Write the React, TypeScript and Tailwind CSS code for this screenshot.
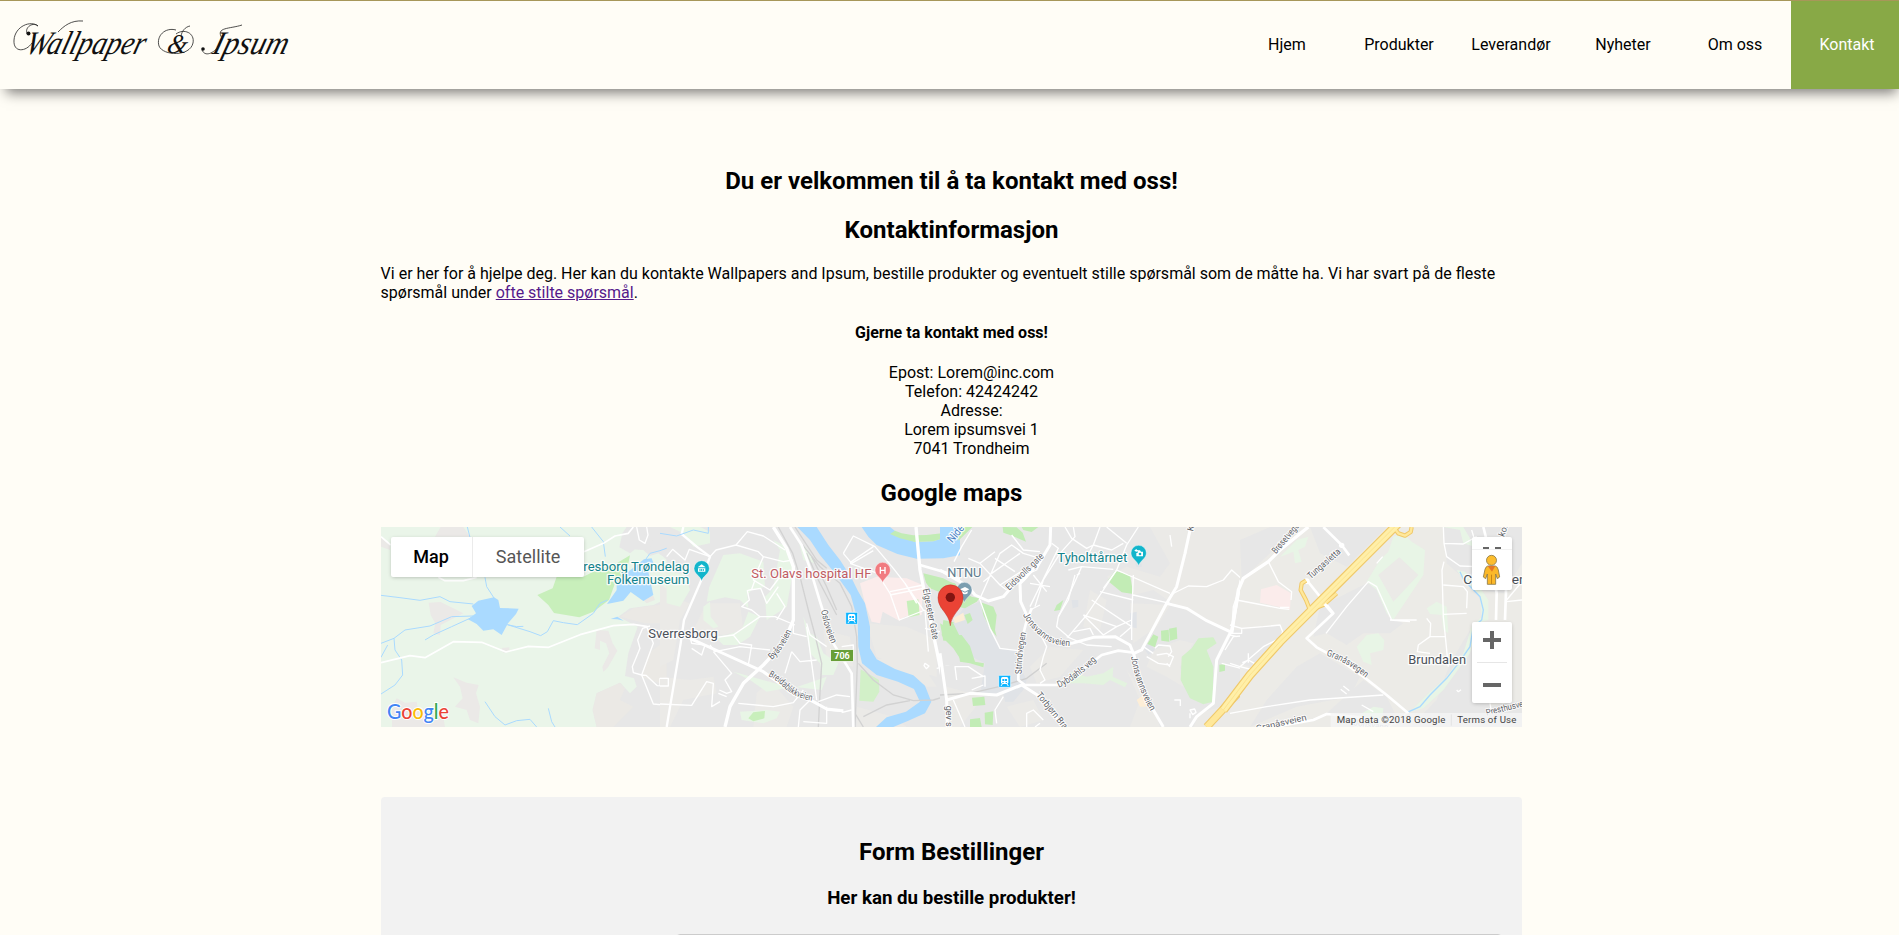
import React from "react";

const NAV = ["Hjem", "Produkter", "Leverandør", "Nyheter", "Om oss"];

type LabelProps = {
  x: number;
  y: number;
  w?: number;
  size?: number;
  rotate?: number;
  fill?: string;
  anchor?: "start" | "middle" | "end";
  weight?: number;
  children: string;
};

function Label({ x, y, w, size = 40, rotate = 0, fill = "#4a5058", anchor = "start", weight = 400, children }: LabelProps) {
  return (
    <text
      x={x}
      y={y}
      fontSize={size}
      fontWeight={weight}
      fill={fill}
      stroke="#ffffff"
      strokeWidth={size > 32 ? 8 : 6}
      strokeOpacity={0.85}
      strokeLinejoin="round"
      paintOrder="stroke"
      textAnchor={anchor}
      textLength={w}
      lengthAdjust="spacingAndGlyphs"
      transform={rotate ? `rotate(${rotate} ${x} ${y})` : undefined}
    >
      {children}
    </text>
  );
}

function CurvedLabel({ id, d, size = 28, w, children }: { id: string; d: string; size?: number; w?: number; children: string }) {
  return (
    <g>
      <path id={id} d={d} fill="none" />
      <text fontSize={size} fill="#5f6368" stroke="#fff" strokeWidth="6" strokeOpacity=".85" paintOrder="stroke" textLength={w} lengthAdjust="spacingAndGlyphs">
        <textPath href={`#${id}`}>{children}</textPath>
      </text>
    </g>
  );
}

function Pin({ x, y, fill, children }: { x: number; y: number; fill: string; children: React.ReactNode }) {
  return (
    <g transform={`translate(${x} ${y})`}>
      <path d="M0 37 C-4 22 -23 16 -23 -1 A23 23 0 0 1 23 -1 C23 16 4 22 0 37Z" fill={fill} stroke="#fff" strokeOpacity=".6" strokeWidth="2" />
      {children}
    </g>
  );
}

function Station({ x, y }: { x: number; y: number }) {
  return (
    <g transform={`translate(${x} ${y})`}>
      <rect x="-18" y="-18" width="36" height="36" rx="3" fill="#0fb5ff" stroke="#fff" strokeWidth="2" />
      <rect x="-11" y="-13" width="22" height="21" rx="5" fill="#fff" />
      <path d="M-7 -7h6v6h-6z M1 -7h6v6h-6z M-7 2h4v3h-4z M3 2h4v3h-4z" fill="#0fb5ff" />
      <path d="M-7 8l-4 6 M7 8l4 6" stroke="#fff" strokeWidth="3" />
    </g>
  );
}

/* The map is drawn in four adjoining tiles; each tile uses thirds of a pixel. */
function WestTile() {
  return (
    <g transform="translate(-11 -7) scale(.33333)">
      <rect x="33" y="21" width="870" height="600" fill="#eaf5e9" />
      <g fill="#ebe9e7">
        <path d="M195 50 L212 21 H280 L300 50Z" />
        <path d="M176 248 L212 246 L280 280 L212 315 L210 345 L190 340 L196 310 L182 285Z" />
        <path d="M395 384 L418 382 L418 392 L400 398Z" />
        <path d="M250 472 L290 488 L326 495 L318 520 L330 560 L325 610 L300 600 L290 570 L255 560 L278 535 L270 500Z" />
        <path d="M66 560 L80 535 L105 548 L140 545 L145 575 L220 590 L225 621 H66Z" />
        <path d="M680 330 L715 332 L728 370 L742 392 L715 440 L700 456 L697 440 L718 400 L708 370 L690 362 L690 390 L674 385Z" />
        <path d="M33 50 L60 75 V90 L33 80Z" />
      </g>
      <path d="M770 21 H903 V130 L880 110 L865 100 L840 108 L820 90 L795 88 L780 100 L748 82 L757 40Z M745 290 L780 265 L850 255 L903 230 V621 H680 L668 570 L680 520 L750 488 L780 520 L800 500 L792 475 L765 468 L775 400 L803 320Z" fill="#e7e7e7" />
      <path d="M815 470 L835 400 L903 350 V500 L840 480Z M680 621 L668 570 L680 520 L750 488 L765 505 L750 540 L790 560 L730 621Z M750 290 L790 265 L903 250 V310 L825 310Z M810 230 L850 228 L855 240 L830 250Z" fill="#ebe9e5" />
      <path d="M795 88 L820 40 L850 65 L835 90Z" fill="#e7e7e7" />
      <path d="M502 225 L548 205 L560 170 L640 170 L680 150 L740 130 L780 106 L768 165 L735 190 L717 240 L670 275 L628 292 L552 279 L535 255Z" fill="#c8efbb" />
      <g fill="#aadaff">
        <path d="M294 298 L318 280 L305 258 L325 242 L372 232 L385 240 L390 264 L446 266 L438 282 L414 310 L395 345 L370 328 L340 332 L320 312Z" />
        <path d="M711 252 L740 210 L740 188 L775 155 L822 118 L845 115 L852 134 L835 155 L850 225 L820 243 L782 216 L760 242Z" />
        <path d="M722 297 L742 290 L761 302 L742 298Z" />
      </g>
      <g fill="none" stroke="#aadaff" strokeWidth="3">
        <path d="M33 226 L90 233 L150 241 L210 230 L240 245 L310 252" />
        <path d="M33 370 L72 355 L105 330 L180 318 L245 290 L310 288 M165 360 L190 345 L245 320 L315 288 M72 355 L75 390 L95 420 L98 465 L75 495 L33 522 M33 412 L53 375" />
        <path d="M345 172 L350 200 L372 234 M292 21 L302 60 M412 314 L480 335 L512 347 L532 335 L550 302 L580 308 L622 314 L670 280 L690 250 L712 240 M412 314 L440 320 L460 319" />
        <path d="M345 545 L375 590 L405 615 L440 602 L480 598 L500 621 M535 565 L545 605 L555 621 M665 21 L700 65 L706 110 M570 21 L600 48 M820 128 L840 100 L870 92 L903 80" />
      </g>
      <g fill="none" stroke="#fff" strokeWidth="5" strokeLinejoin="round">
        <path d="M33 428 L120 407 L165 413 L250 365 L335 367 L408 396 L475 379 L536 382 L630 344 L730 317 L790 313 L833 320" />
        <path d="M205 172 L225 182 L280 182 L320 172 M33 50 L62 75 M642 95 L700 70 L735 48 L775 40 L790 21" />
        <path d="M800 21 L808 60 L825 70 L834 45 L830 21 M840 318 L818 325 L803 360 L810 385 L787 440 L790 458 L815 465 L850 552 L892 556 M830 320 L850 370 L815 465 L828 466 L862 497 L903 498 M870 475 h25 v20 h-25z" strokeWidth="4" />
      </g>
    </g>
  );
}

function RiverTile() {
  return (
    <g transform="translate(279 -7) scale(.33333)">
      <rect x="20" y="21" width="882" height="600" fill="#e7e7e7" />
      <path d="M0 190 L60 240 L90 250 L60 300 L40 420 L0 440Z M0 470 L90 480 L160 470 L170 520 L70 540 L30 621 H0Z M280 621 L290 520 L330 480 L400 560 L380 621Z M600 420 L770 410 L830 500 L780 500 L600 430Z M620 310 L740 320 L830 360 L830 470 L720 440 L650 410Z M100 330 L140 250 L240 250 L250 330 L190 345Z M490 330 L570 350 L580 440 L500 420Z M590 560 L700 590 L740 621 H590Z" fill="#ebeae7" />
      <g fill="#e8f5e6">
        <path d="M20 150 L75 165 L90 210 L60 260 L20 250Z M30 21 H120 L150 35 L150 70 L100 80 L70 40Z" />
        <path d="M148 200 L190 105 L240 100 L310 125 L315 200 L275 210 L262 225 L265 265 L240 240 L195 232 L140 245Z M265 275 L300 290 L270 350 L232 375 L190 375 L165 350 L200 345 L245 330Z M130 260 L150 245 L152 290 L175 320 L160 325 L130 300Z" />
        <path d="M315 230 L340 205 L360 90 L340 60 L380 80 L400 150 L380 260 L320 300Z M415 60 L440 85 L465 130 L430 120Z" />
        <path d="M220 455 L290 475 L400 505 L500 470 L485 510 L400 500 L320 515 L270 480Z M430 290 L450 340 L470 350 L490 400 L535 430 L520 465 L485 465 L480 430 L450 400 L440 345Z M240 575 L320 570 L360 575 L350 595 L310 610 L245 600Z" />
      </g>
      <path d="M602 448 L657 480 L658 515 L640 545 L598 542Z" fill="#d2f0c8" />
      <path d="M265 595 L280 577 L315 573 L313 595 L280 604Z" fill="#c8efbb" />
      <path d="M600 190 L650 170 L740 175 L788 195 L785 285 L735 290 L718 302 L668 275 L660 310 L635 305 L615 250Z" fill="#fbeceb" />
      <path d="M740 243 L775 238 L779 285 L746 292Z" fill="#c8efbb" />
      <path d="M412 21 H470 L505 75 L540 120 L575 175 L595 215 L615 250 L630 320 L630 385 L650 418 L705 447 L760 466 L795 497 L814 545 L795 580 L745 602 L700 621 H648 L680 592 L738 575 L780 545 L762 507 L714 485 L650 465 L606 430 L595 380 L593 300 L572 225 L525 160 L480 105 L450 60Z" fill="#aadaff" />
      <path d="M605 21 H690 L720 45 L765 66 L820 64 L860 50 L882 21 H903 V105 L850 115 L770 116 L712 102 L650 75 L625 50Z" fill="#aadaff" />
      <path d="M690 42 L705 32 L725 40 L760 46 L800 45 L845 40 L870 21 H882 L865 50 L820 64 L765 66 L720 55Z M790 160 L850 175 L888 195 L840 217 L810 205 L798 188Z M850 300 L895 310 L903 420 L880 385 L855 360 L845 345Z" fill="#c2ecb5" />
      <g fill="none" stroke="#d2d2d2" strokeWidth="4">
        <path d="M355 21 L398 100 L420 170 L445 270 L465 345 L485 430 L480 520 L475 621 M400 40 L480 140 L540 190 L575 260 L590 350 L592 430 L585 621 M405 21 L470 120 L500 145 M440 100 L475 180 L530 285 M455 110 L500 200 L530 270 M595 430 L640 480 L700 525 L760 542 L820 540 L903 515 M610 590 L680 555 L750 542 M585 580 L610 621" />
      </g>
      <g fill="none" stroke="#fff" strokeWidth="4" strokeLinejoin="round">
        <path d="M20 110 L38 88 L75 120 L88 88 L150 110 L168 90 L228 75 L262 35 L310 48 L375 90 M228 75 L295 95 L310 110 L370 125 L398 120 M310 110 L280 180 L330 210 L375 150" />
        <path d="M285 180 L275 208 L262 212 L268 240 L245 260 L275 270 L300 290 L220 345 L150 355 M270 210 L302 205 L320 250 L355 200 M300 290 L345 290 L405 315 M350 220 L375 260 L350 300 M220 345 L240 370 L275 375 L265 435 M150 375 L165 395 L240 380 L330 390" />
        <path d="M90 350 L95 370 L135 375 L125 405 L95 385 M160 395 L215 460 L195 480 L215 515 L200 520 L178 510 M0 475 h25 v23 h-25 M0 552 L95 556 L140 485 L160 490 L155 560 L180 545 M175 520 L200 530" />
        <path d="M235 550 L340 560 L400 548 L430 510 M395 395 L420 425 L470 420 M395 395 L375 460 M400 310 L400 340 L440 350 M475 545 L530 525 L570 530 M575 570 L545 578 M500 560 L500 610 L430 605 M500 570 L550 575 M415 621 L420 570 L460 530 M440 320 L455 430 L470 540" />
        <path d="M440 310 L450 345 L500 380 M545 380 L580 375 L580 420 M550 100 L580 48 L645 80 L700 145 L735 190 L790 270 M550 100 L575 130 L640 92 M570 130 L680 170 M640 80 L570 128 M655 165 L690 220 L718 300 L795 270 M690 215 L790 195 M690 225 L790 205 M735 190 L770 250 M795 325 L840 335 M795 270 L805 395 M830 445 L865 438 L903 440 M795 430 l12 8 l-8 8 l-7 -9z" />
      </g>
      <g fill="none" stroke="#fff" strokeLinejoin="round">
        <path d="M70 21 L65 42 L110 80 L150 110 L120 190 L72 300 L62 370 L20 621" strokeWidth="7" />
        <path d="M340 21 L380 85 L400 140 L400 300 L370 370 L310 435 L250 490 L210 560 L195 621" strokeWidth="10" />
        <path d="M390 21 L425 75 L450 145 L480 245 L520 370 L575 460 L580 621" strokeWidth="8" />
        <path d="M90 355 L200 405 L310 455 L380 505 L460 545 L500 567 L550 572" strokeWidth="9" />
        <path d="M768 21 L780 150 L800 250 L830 390 L860 540 L875 621" strokeWidth="10" />
        <path d="M780 135 L860 158 L903 180 M865 540 L903 530" strokeWidth="8" />
      </g>
      <g fill="none" stroke="#aadaff" strokeWidth="3"><path d="M0 40 L50 48 L100 30 L145 40 V21" /></g>
      <Label x={88} y={153} w={318} size={39} fill="#12828a" anchor="end">resborg Trøndelag</Label>
      <Label x={88} y={191} w={247} size={39} fill="#12828a" anchor="end">Folkemuseum</Label>
      <Label x={-35} y={353} w={208} size={38}>Sverresborg</Label>
      <Label x={274} y={175} w={360} size={38} fill="#c05c63">St. Olavs hospital HF</Label>
      <Pin x={125} y={146} fill="#12b5cb">
        <path d="M-12 -4 L0 -13 L12 -4Z M-11 -1h22v10h-22z" fill="#fff" />
        <path d="M-5 1v6 M0 1v6 M5 1v6" stroke="#12b5cb" strokeWidth="3" />
      </Pin>
      <Pin x={668} y={151} fill="#f17b80">
        <path d="M-7 -10v20 M7 -10v20 M-7 0h14" stroke="#fff" strokeWidth="4" />
      </Pin>
      <Station x={575} y={295} />
      <rect x="512" y="389" width="68" height="35" fill="#689f38" stroke="#fff" strokeWidth="2" />
      <text x="546" y="416" fontSize="27" fontWeight="700" textAnchor="middle" fill="#fff" textLength="46">706</text>
      <CurvedLabel id="byas" d="M335 420 Q370 390 397 328" w={106}>Byåsveien</CurvedLabel>
      <CurvedLabel id="oslo" d="M483 272 Q492 320 515 374" w={105}>Osloveien</CurvedLabel>
      <CurvedLabel id="breid" d="M325 468 Q350 480 380 510 Q410 535 462 544" w={153}>Breidablikkveien</CurvedLabel>
      <CurvedLabel id="elge" d="M788 208 L820 366" w={155}>Elgeseter Gate</CurvedLabel>
    </g>
  );
}

function CampusTile() {
  return (
    <g transform="translate(559 -7) scale(.33333)">
      <path d="M60 21 H903 V621 H0 V440 L60 430Z" fill="#e7e7e7" />
      <path d="M630 21 H903 V330 L850 330 L690 245 L640 210 L580 225 L500 170 L560 140 L660 170 L690 130Z M570 250 L690 255 L650 320 L580 370Z M450 210 L500 240 L480 330 L430 320Z M640 390 L720 360 L760 370 L720 440 L730 500 L680 470 L620 440Z M270 440 L330 380 L430 390 L360 470 L290 490Z M20 500 L130 530 L60 621 H20Z M200 560 L280 540 L310 600 L240 621Z M560 450 L640 560 L660 621 H570L600 540Z M780 580 L903 540 V621 H760Z" fill="#ebeae7" />
      <path d="M0 21 H80 L58 58 L30 90 L0 108Z" fill="#aadaff" />
      <path d="M55 21 H97 L85 33 L55 62Z M188 21 L230 22 L248 38 L258 65 L210 45 L190 38Z M245 21 H295 L275 36 L250 30Z" fill="#c2ecb5" />
      <path d="M70 265 L120 245 L130 285 L150 330 L180 388 L235 390 L245 450 L260 480 L250 510 L220 545 L195 545 L190 520 L120 525 L135 430 L95 410 L60 350 L40 310Z" fill="#e0e3e7" />
      <g fill="#e0e3e7"><path d="M395 240 L415 240 L415 260 L398 265Z M610 380 L630 370 L645 390 L625 405Z M585 130 L605 130 L605 140 L590 142Z M570 280 L590 275 L590 325 L570 320Z" /></g>
      <path d="M0 180 L45 190 L60 210 L95 230 L118 235 L110 245 L75 265 L30 255 L0 265Z M0 310 L35 330 L50 345 L65 345 L90 378 L105 425 L132 430 L130 442 L90 430 L60 425 L55 390 L40 360 L10 362Z M73 285 L90 279 L98 300 L83 312Z M122 247 L160 260 L170 285 L165 330 L170 350 L150 325 L130 285Z M350 255 L370 240 L360 270 L342 273Z M503 182 L525 152 L570 165 L580 222 L545 217Z M622 372 L640 343 L655 350 L645 382Z M663 332 L686 329 L688 365 L664 362Z M687 326 L710 322 L712 356 L690 362Z M96 533 L133 530 L136 555 L99 558Z M134 578 L160 574 L158 615 L135 613Z M90 598 L120 594 L125 621 H90Z M838 434 L855 432 L855 452 L838 456Z" fill="#c2ecb5" />
      <path d="M775 355 L820 352 L830 370 L800 390 L820 440 L818 545 L790 553 L750 535 L722 480 L725 410 L755 385Z" fill="#d2f0c8" />
      <path d="M395 455 L440 470 L490 460 L520 440 L518 470 L562 490 L555 502 L510 480 L490 495 L430 490 L380 490Z" fill="#e3f3df" />
      <path d="M40 295 L70 278 L75 300 L45 310Z M590 540 L610 525 L620 560 L600 560Z" fill="#fdeed7" />
      <g fill="none" stroke="#d0d0d0" strokeWidth="4"><path d="M0 525 L90 520 L190 497 L260 475 L320 430" /></g>
      <g fill="none" stroke="#fff" strokeWidth="4" strokeLinejoin="round">
        <path d="M42 125 L65 80 L95 30 M118 240 L180 100 L215 75 L250 100 L310 118 M85 115 L120 130 L180 195 L200 210 M120 130 L165 95 M155 160 L240 100 M165 115 L225 155 M130 185 L155 165 M180 195 L250 150 M215 45 L250 90 L300 95" />
        <path d="M335 70 L355 85 L270 260 M310 110 L290 150 L255 165 M375 21 L395 55 L440 85 L460 75 L515 90 L550 70 M400 21 L405 50 L360 100 L310 180 L285 260 M480 21 L460 75 M500 21 L560 70 M595 21 L560 75 L530 150 L440 285 L385 350 L350 320 L355 290 L380 240 L425 140 L520 148 M385 150 L425 140 M460 75 L430 130 M270 190 L330 200 M280 165 L320 215" />
        <path d="M410 165 L420 160 M355 290 L385 240 L405 165 M490 205 L530 150 L690 220 M580 225 L690 250 M580 165 L575 300 L575 360 M430 285 L530 320 L575 300 M455 240 L575 320 L540 350 M480 215 L580 240 M430 285 L490 345 L530 320 M400 335 L450 325 L460 345" />
        <path d="M380 350 L440 375 L515 380 M270 270 L300 255 M265 300 L300 340 L320 380 L310 410 L300 450 L315 480 L300 490 M50 480 L45 440 L85 440 L130 470 M95 475 L135 468 L135 500 M130 495 L95 510 M120 240 L150 325 L180 385 L235 392 M170 610 L165 570 L190 530 M260 621 L260 580 L280 570 L310 600 M300 610 L285 621 M40 540 L75 621 M640 400 L610 380 M620 410 L655 430 L690 435 L700 410 L680 400 L650 405 M645 385 L655 375 L690 378 L695 395 L685 410 M680 430 L690 440" />
        <path d="M703 540 h18 v18 M750 570 l14 -3 l4 10 l-10 7z M750 580v15" />
        <path d="M690 225 L745 198 L800 200 L850 180 L875 150 L903 175 M875 330 L880 260 L903 190 M845 430 L903 445 M855 390 L880 350 L903 348 M690 45 L695 80 M735 90 L738 100" />
      </g>
      <g fill="none" stroke="#fff" strokeLinejoin="round">
        <path d="M332 21 L330 75 L300 125 L250 180 L220 195 L190 230 L145 243 L105 225 L85 200 L0 150" strokeWidth="9" />
        <path d="M260 170 L240 190 L242 245 L260 285 L300 340 L350 370 L395 370 L460 352 L525 350 L570 375 L582 405 L605 510 L640 570 L670 621" strokeWidth="9" />
        <path d="M275 265 L258 310 L235 400 L235 480 L255 495 L350 495 L440 440 L485 405 L535 392 L582 398" strokeWidth="8" />
        <path d="M20 540 L90 520 L170 525 L245 495 L300 530 L370 621 M0 400 L20 540 L22 621" strokeWidth="9" />
        <path d="M752 21 L735 100 L710 200 L680 250 L605 390 L582 400 M680 250 L740 265 L800 302 L870 335 M903 180 L875 330 L830 420 L820 550 L770 590 L750 621" strokeWidth="9" />
      </g>
      <path d="M800 621 L903 510" stroke="#f0c96a" strokeWidth="24" />
      <path d="M800 621 L903 510" stroke="#ffe89a" strokeWidth="18" />
      <Label x={37} y={70} w={58} rotate={-50} size={33} fill="#4a80c5">Nide</Label>
      <Label x={22} y={172} w={102} size={38} fill="#5f7d8e">NTNU</Label>
      <Label x={352} y={125} w={210} size={39} fill="#12828a">Tyholttårnet</Label>
      <Pin x={596} y={100} fill="#12b5cb">
        <path d="M-4 -9h8l3 4h6v14h-20V-1h4z M-12 -10h3v-3h3v3h3v3h-3v3h-3v-3h-3z" fill="#fff" />
        <circle cx="4" cy="2" r="4" fill="#12b5cb" />
      </Pin>
      <Pin x={73} y={211} fill="#7b9eb0">
        <path d="M-13 -3L2 -10L15 -3L2 4Z M-7 3v6q9 6 17 0V3L2 7Z" fill="#fff" />
      </Pin>
      <path d="M31 317 C27 278 -6 267 -6 233 A37 38 0 0 1 69 233 C69 267 35 278 31 317Z" fill="#ea4335" stroke="#c5322a" strokeWidth="1.5" />
      <circle cx="31" cy="232" r="14" fill="#811411" />
      <Station x={194} y={484} />
      <CurvedLabel id="eids" d="M208 212 L316 108" w={146}>Eidsvolls gate</CurvedLabel>
      <CurvedLabel id="jons1" d="M248 285 Q288 350 340 370 Q360 377 394 378" w={178}>Jonsvannsveien</CurvedLabel>
      <CurvedLabel id="strind" d="M245 462 Q244 400 260 334" w={125}>Strindvegen</CurvedLabel>
      <CurvedLabel id="dyb" d="M357 503 Q410 480 472 418" w={140}>Dybdahls veg</CurvedLabel>
      <CurvedLabel id="torb" d="M288 526 L378 638" w={132}>Torbjørn Bra</CurvedLabel>
      <CurvedLabel id="jons2" d="M573 410 Q585 490 634 578" w={175}>Jonsvannsveien</CurvedLabel>
      <Label x={17} y={557} w={78} rotate={90} size={27} fill="#5f6368">gev su</Label>
      <Label x={759} y={35} rotate={-75} size={27} fill="#5f6368">Kong</Label>
    </g>
  );
}

function EastTile() {
  return (
    <g transform="translate(849 -7) scale(.33333)">
      <rect x="30" y="21" width="850" height="600" fill="#ecebe7" />
      <path d="M30 60 L120 21 H200 L120 100 L35 180Z M240 21 H470 L350 140 L270 100Z M30 330 L150 315 L160 350 L60 440 L30 430Z M270 260 L410 190 L445 205 L475 290 L520 310 L480 340 L400 340 L350 375 L290 340 L250 350Z M60 621 L110 540 L200 440 L270 400 L390 470 L360 530 L200 560Z M640 21 H876 V130 L820 220 L740 210 L650 130Z M660 430 L720 330 L780 560 L876 540 V621 H540 L620 540Z M400 480 L470 530 L500 590 L400 621 L290 580Z" fill="#e7e7e7" />
      <g fill="#e8f5e6">
        <path d="M490 50 L520 40 L545 65 L585 90 L580 165 L490 300 L470 280 L440 210 L410 185 L450 120 L475 95Z" />
        <path d="M380 380 L410 345 L445 340 L463 360 L460 390 L420 400 L425 435 L400 425Z M590 265 L620 245 L650 260 L655 340 L640 330 L635 285 L600 282Z M680 150 L705 155 L740 190 L775 240 L775 300 L740 310 L720 400 L640 510 L580 565 L540 575 L590 525 L650 470 L700 400 L725 320 L755 290 L750 230 L700 180Z M640 21 H700 L735 80 L700 70 L690 30Z M150 110 L200 60 L235 50 L225 80 L205 90 L215 125 L195 130 L190 95 L165 105Z M370 595 L430 560 L460 565 L455 621 H380Z" />
      </g>
      <path d="M445 165 L508 112 L565 165 L490 245Z" fill="#ebeae7" />
      <path d="M93 208 L140 195 L183 220 L180 268 L90 248Z" fill="#fbeceb" />
      <g fill="none" stroke="#aadaff" strokeWidth="4"><path d="M690 155 L700 178 L750 230 L760 270 L755 300 L730 320 L720 380 L685 430 L650 475 L600 525 L570 560 L530 578" /></g>
      <g fill="none" stroke="#fff" strokeWidth="4" strokeLinejoin="round">
        <path d="M115 125 L145 185 L185 215 L183 240 M20 240 L150 265 L178 268 M150 262h28 M115 125 L140 100 M0 315 L35 325 L100 320 L150 315 L158 335 L150 355 L100 380 L30 440 L70 450 M0 340 h35 v-12 M0 345 L20 350 M0 430 L30 440 M55 400 v28 M55 420 l-18 8 M55 420 l18 10 M0 580 L110 560 L240 540 L460 525 M340 498 L358 512 M332 508 L350 522 M395 555 L430 575" />
        <path d="M288 340 L350 260 L415 185 L440 200 L485 300 L560 300 M480 300 L540 305 M640 21 L642 70 L650 110 L690 138 L740 140 M642 70 L700 72 L740 50 M642 125 L636 150 L640 290 L655 440 M640 283 L710 280 M640 195 L700 200 L712 215 L710 265 M590 295 L602 310 L600 350 L565 375 L562 395 L600 400 M600 350 L645 350 M830 245 L876 240 M880 180 L830 240 M725 30 L740 80 M680 510 l5 5 l8 -6 M440 130 l18 -20 M475 621 L530 580 M780 550 L785 580" />
        <path d="M760 21 L780 100 L800 220 L798 300 M815 40 L830 160 L825 300" strokeWidth="8" />
      </g>
      <g fill="none" stroke="#fff" strokeLinejoin="round">
        <path d="M235 21 L150 90 L115 125 L40 175 L25 210 L5 340" strokeWidth="10" />
        <path d="M280 21 L335 75 L358 106 M230 180 L310 280 L230 355 L260 382 L330 420 L400 470 L470 525 L535 580" strokeWidth="8" />
        <path d="M130 621 L250 600 L290 582 L370 590 L500 610" strokeWidth="8" />
        <circle cx="335" cy="76" r="8" fill="#fff" stroke="none" /><circle cx="230" cy="184" r="9" fill="#fff" stroke="none" />
      </g>
      <g fill="none" strokeLinejoin="round">
        <path d="M242 275 L228 240 L212 210 L215 190 L228 182 M490 21 L505 40 L525 47 L542 36 L545 21 M242 270 L280 255 L320 220" stroke="#f0c96a" strokeWidth="13" />
        <path d="M-20 570 L60 465 L150 365 L240 275 L320 195 L400 115 L505 10" stroke="#f0c96a" strokeWidth="27" />
        <path d="M242 275 L228 240 L212 210 L215 190 L228 182 M490 21 L505 40 L525 47 L542 36 L545 21 M242 270 L280 255 L320 220" stroke="#ffe89a" strokeWidth="7" />
        <path d="M-20 570 L60 465 L150 365 L240 275 L320 195 L400 115 L505 10" stroke="#ffefa8" strokeWidth="20" />
        <path d="M-20 570 L60 465 L150 365 L240 275 L320 195 L400 115 L505 10" stroke="#fbdc83" strokeWidth="2" />
      </g>
      <path d="M284 252 L308 280" stroke="#fff" strokeWidth="9" />
      <CurvedLabel id="bros" d="M138 103 L222 4" w={122}>Brøsetvegen</CurvedLabel>
      <CurvedLabel id="tung" d="M242 178 L338 94" w={122}>Tungasletta</CurvedLabel>
      <CurvedLabel id="gran" d="M289 407 Q350 425 410 476" w={136}>Granåsvegen</CurvedLabel>
      <Label x={822} y={52} rotate={-70} size={27} fill="#5f6368">kole</Label>
      <Label x={700} y={191} w={190} size={38}>Charlotten</Label>
      <Label x={535} y={431} w={173} size={38}>Brundalen</Label>
      <Label x={770} y={587} rotate={-14} size={27} w={128} fill="#5f6368">Presthusveg</Label>
      <Label x={80} y={635} rotate={-13} size={27} w={155} fill="#5f6368">Granåsveien</Label>
      <Label x={370} y={616} rotate={8} size={26} w={105} fill="#b4b8bc">Jonsvann</Label>
      <rect x="302" y="579" width="574" height="42" fill="#f5f5f5" fillOpacity=".75" />
      <path d="M664 583V617" stroke="#ddd" strokeWidth="2" />
      <text x="320" y="608" fontSize="29" fill="#444" textLength="326">Map data ©2018 Google</text>
      <text x="682" y="608" fontSize="29" fill="#444" textLength="177">Terms of Use</text>
    </g>
  );
}

function Pegman() {
  return (
    <svg className="absolute left-[10px] top-[17px]" width="19" height="32" viewBox="0 0 57 96" aria-hidden="true">
      <path d="M17 36H40Q47 38 49 48L53 69L46 74L41 60V91H16V60L11 74L4 69L9 46Q11 38 17 36Z" fill="#fbb829" stroke="#8b7a4a" strokeWidth="2.5" strokeLinejoin="round" />
      <path d="M17 36H40L30 53Z" fill="#e57725" />
      <path d="M28.5 62V90" stroke="#c88714" strokeWidth="3" />
      <circle cx="28.5" cy="19" r="15" fill="#fcbd2e" stroke="#8b7a4a" strokeWidth="2.5" />
    </svg>
  );
}

function MapPanel() {
  return (
    <div className="relative h-[200px] w-full overflow-hidden bg-[#e7e7e7]">
      <svg className="block h-[200px] w-[1142px] font-['Roboto',sans-serif]" viewBox="0 0 1142 200">
        <WestTile />
        <RiverTile />
        <CampusTile />
        <EastTile />
        <text x="6" y="192" fontSize="20.5" fontFamily="Lato, sans-serif" fontWeight="500" textLength="62" lengthAdjust="spacingAndGlyphs" stroke="#fff" strokeWidth="2" paintOrder="stroke">
          <tspan fill="#4285f4">G</tspan>
          <tspan fill="#ea4335">o</tspan>
          <tspan fill="#fbbc05">o</tspan>
          <tspan fill="#4285f4">g</tspan>
          <tspan fill="#34a853">l</tspan>
          <tspan fill="#ea4335">e</tspan>
        </text>
      </svg>
      <div className="absolute left-[10px] top-[10px] flex h-10 rounded-xs bg-white text-lg shadow-[0_1px_4px_-1px_rgba(0,0,0,0.3)]">
        <button className="w-[82px] border-r border-[#ebebeb] font-medium text-black">Map</button>
        <button className="w-[111px] text-[#565656]">Satellite</button>
      </div>
      <div className="absolute left-[1091px] top-[10px] h-[53px] w-10 rounded-xs bg-white shadow-[0_1px_4px_-1px_rgba(0,0,0,0.3)]">
        <div className="flex h-[13px] items-end justify-center gap-[6px] border-b border-[#f2f2f2]">
          <span className="h-[2px] w-[6px] bg-[#666]" />
          <span className="h-[2px] w-[6px] bg-[#666]" />
        </div>
        <Pegman />
      </div>
      <div className="absolute left-[1091px] top-[95px] flex h-[81px] w-10 flex-col items-center rounded-xs bg-white shadow-[0_1px_4px_-1px_rgba(0,0,0,0.3)]">
        <svg width="40" height="40" viewBox="0 0 40 40"><path d="M11 16h7V9h4v7h7v4h-7v7h-4v-7h-7z" fill="#666" /></svg>
        <div className="h-px w-[30px] bg-[#e6e6e6]" />
        <svg width="40" height="40" viewBox="0 0 40 40"><path d="M11 20h18v4H11z" fill="#666" /></svg>
      </div>
    </div>
  );
}

function Logo() {
  return (
    <svg className="block" width="300" height="88" viewBox="0 1 300 88">
      <g fontFamily="'Liberation Serif', serif" fontStyle="italic" fill="#111">
        <text transform="translate(24 54) skewX(-16)" fontSize="33" textLength="119" lengthAdjust="spacingAndGlyphs">Wallpaper</text>
        <text transform="translate(166 53) skewX(-12)" fontSize="27" textLength="20" lengthAdjust="spacingAndGlyphs">&amp;</text>
        <text transform="translate(211 54) skewX(-16)" fontSize="33" textLength="75" lengthAdjust="spacingAndGlyphs">Ipsum</text>
      </g>
      <circle cx="28.500" cy="33.500" r="2" fill="#111" />
      <circle cx="203" cy="49" r="1.800" fill="#111" />
      <g fill="none" stroke="#222" strokeWidth=".8">
        <path d="M28 35C23 29 32 21 38 26M38 26C31 20 15 26 14 40C13 53 26 52 32 43M58 32C64 26 71 20 83 21" />
        <path d="M176 30C165 27 156 36 159 46C163 56 190 57 193 43C195 33 184 28 176 34M190 26C185 27 182 31 181 36M202 50C205 57 213 54 220 45M222 38C215 27 230 29 242 25" />
      </g>
    </svg>
  );
}

export default function App() {
  return (
    <div className="h-[935px] w-full overflow-hidden bg-[#fffdf6] font-['Roboto',sans-serif] text-base leading-[19px] text-black">
      <div className="w-[1903px]">
        <div className="h-px bg-[#a8985a]" />
        <header className="relative flex h-[88px] justify-between bg-[#fffdf6] shadow-[0_10px_12px_-6px_rgba(0,0,0,0.5)]">
          <Logo />
          <nav className="flex">
            {NAV.map((item) => (
              <a key={item} href="#" className="flex w-28 items-center justify-center pb-0.5">{item}</a>
            ))}
            <a href="#" className="flex w-28 items-center justify-center bg-[#88a946] pb-0.5 text-white">Kontakt</a>
          </nav>
        </header>
        <main className="mx-auto flex w-[1141.8px] flex-col pt-[78px]">
          <h2 className="text-center text-2xl leading-7 font-bold">Du er velkommen til å ta kontakt med oss!</h2>
          <h2 className="mt-[21px] text-center text-2xl leading-7 font-bold">Kontaktinformasjon</h2>
          <p className="mt-5">
            Vi er her for å hjelpe deg. Her kan du kontakte Wallpapers and Ipsum, bestille produkter og eventuelt stille spørsmål som de måtte ha. Vi har svart på de fleste spørsmål under{" "}
            <a href="#" className="text-[#551a8b] underline">ofte stilte spørsmål</a>.
          </p>
          <h4 className="mt-[21px] text-center font-bold">Gjerne ta kontakt med oss!</h4>
          <ul className="mt-[21px] pl-10 text-center">
            <li>Epost: Lorem@inc.com</li>
            <li>Telefon: 42424242</li>
            <li>Adresse:</li>
            <li>Lorem ipsumsvei 1</li>
            <li>7041 Trondheim</li>
          </ul>
          <h2 className="mt-[21px] mb-5 text-center text-2xl leading-7 font-bold">Google maps</h2>
          <MapPanel />
          <section className="mt-[70px] h-[300px] rounded bg-[#f2f2f2] px-5 pt-[41px]">
            <h2 className="text-center text-2xl leading-7 font-bold">Form Bestillinger</h2>
            <h3 className="mt-[21px] text-center text-[18.72px] leading-[22px] font-bold">Her kan du bestille produkter!</h3>
            <div className="mt-[25px] ml-auto h-11 w-3/4 rounded border border-[#ccc] bg-white" />
          </section>
        </main>
      </div>
    </div>
  );
}
